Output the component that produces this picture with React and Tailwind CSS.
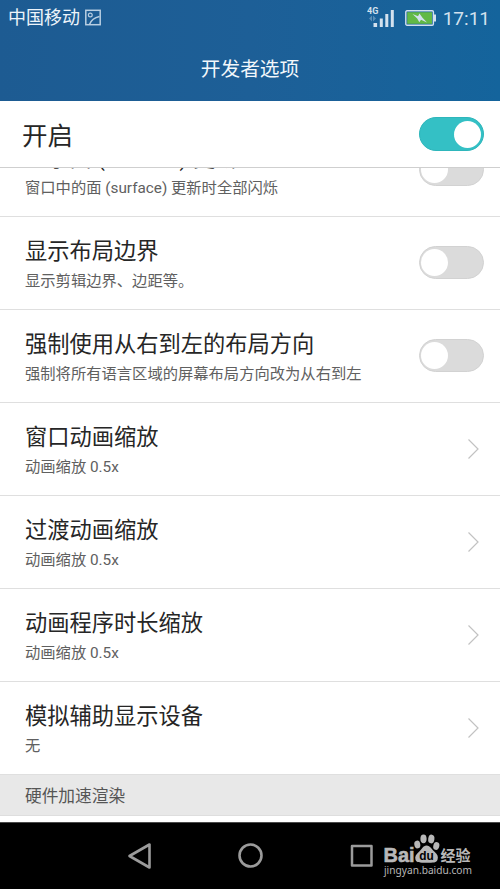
import React from 'react'

const rows = [
  { title: '显示面 (surface) 更新', sub: '窗口中的面 (surface) 更新时全部闪烁', toggle: true },
  { title: '显示布局边界', sub: '显示剪辑边界、边距等。', toggle: true },
  { title: '强制使用从右到左的布局方向', sub: '强制将所有语言区域的屏幕布局方向改为从右到左', toggle: true },
  { title: '窗口动画缩放', sub: '动画缩放 0.5x' },
  { title: '过渡动画缩放', sub: '动画缩放 0.5x' },
  { title: '动画程序时长缩放', sub: '动画缩放 0.5x' },
  { title: '模拟辅助显示设备', sub: '无' },
];

const Toggle = ({ on }) => (
  <div
    className={
      on
        ? 'flex h-[34px] w-[65.5px] items-center justify-end rounded-full border border-[#2eb6bb] bg-[#34c0c5] px-[2px]'
        : 'mb-px flex h-[33px] w-[65.5px] items-center rounded-full border border-[#d2d2d2] bg-[#dbdbdb] px-[1.5px]'
    }
  >
    <div className="size-[27px] rounded-full bg-white" />
  </div>
);

const Chevron = () => (
  <svg className="mr-[4px]" width="13" height="22" viewBox="0 0 13 22" fill="none" stroke="#c2c2c2" strokeWidth="1.2">
    <path d="M1.5 1.5 11 11 1.5 20.5" />
  </svg>
);

const Row = ({ title, sub, toggle }) => (
  <div className="flex h-[93px] shrink-0 items-center justify-between border-b border-[#dfdfdf] pr-4 pl-[25px]">
    <div className="pt-[1px] whitespace-nowrap">
      <div className="text-[22.25px] leading-[30px] text-[#262626]">{title}</div>
      <div className="mt-[4px] text-[15.3px] leading-[22px] text-[#606060]">{sub}</div>
    </div>
    {toggle ? <Toggle /> : <Chevron />}
  </div>
);

const StatusBar = () => (
  <div className="flex h-[35px] items-center justify-between pr-[10px] pl-2 text-[#d3e1ee]">
    <div className="flex items-center gap-[5px]">
      <span className="text-[18px] leading-[24px] text-[#edf4fa]">中国移动</span>
      <svg width="16" height="17" viewBox="0 0 16 17" fill="none" stroke="#b9cfe2" strokeWidth="1.5">
        <rect x="0.8" y="1.3" width="14.4" height="14.4" />
        <circle cx="5.3" cy="6" r="1.9" strokeWidth="1.2" />
        <path d="M4.5 15.5C6 11.5 9.5 8.5 14.5 7.5" />
      </svg>
    </div>
    <div className="flex items-center">
      <svg width="27" height="22" viewBox="0 0 27 22" fill="#d3e1ee">
        <text x="0" y="7.2" fontSize="9" fontWeight="700" fontFamily="Roboto, sans-serif">4G</text>
        <path d="M2 11.5 5 8.5v6zM9 11.5 6 8.5v6z" opacity="0.35" />
        <rect x="6.5" y="16" width="3.6" height="4" />
        <rect x="12.8" y="11.5" width="3" height="8.5" />
        <rect x="18.3" y="7" width="3" height="13" />
        <rect x="23.8" y="3" width="3" height="17" />
      </svg>
      <svg className="ml-[11px]" width="32" height="16" viewBox="0 0 32 16">
        <rect x="0.8" y="0.8" width="27.6" height="14.4" rx="1.2" fill="none" stroke="#d3e1ee" strokeWidth="1.4" />
        <rect x="2.2" y="2.2" width="24.8" height="11.6" fill="#62b946" />
        <path d="M29 4.5h2v7h-2z" fill="#d3e1ee" />
        <path d="M7.5 4 13 6.300 14.500 3.500 17.500 7.800 22 12.500 16 9.800 14.300 12.300 12.200 8.500z" fill="#d3e1ee" />
      </svg>
      <span className="ml-[6px] pt-[2px] font-['Roboto'] text-[19px] leading-[24px]">17:11</span>
    </div>
  </div>
);

const Watermark = () => (
  <svg width="92" height="48" viewBox="382 833 92 48" fill="#b8b8b8">
    <text x="383.5" y="862.5" fontSize="20" fontWeight="700" fontFamily="Liberation Sans, sans-serif" stroke="#b8b8b8" strokeWidth="0.6" textLength="31" lengthAdjust="spacingAndGlyphs">Bai</text>
    <ellipse cx="417.3" cy="845.5" rx="3" ry="3.9" transform="rotate(-10 417.3 845.5)" />
    <ellipse cx="423.5" cy="839.8" rx="3.1" ry="4.4" />
    <ellipse cx="431.3" cy="840" rx="3.1" ry="4.4" transform="rotate(8 431.3 840)" />
    <ellipse cx="436.3" cy="847" rx="3" ry="3.9" transform="rotate(15 436.3 847)" />
    <path d="M426.5 846.5c4 0 5 4 8 6.3c3 2.500 4 5 3 8c-1 3-4 3-11 3s-10 0-11-3c-1-3 .5-5.500 3.500-8c3-2.500 4-6.300 7.500-6.300z" />
    <text x="419.3" y="861.3" fontSize="12.5" fontWeight="700" fill="#000" fontFamily="Liberation Sans, sans-serif" textLength="14.5" lengthAdjust="spacingAndGlyphs">du</text>
    <text x="440.5" y="862" fontSize="15" fontWeight="700" fontFamily="Noto Sans CJK SC, sans-serif">经验</text>
    <text x="384" y="874.5" fontSize="11.5" fontFamily="Noto Sans, sans-serif" textLength="88" lengthAdjust="spacingAndGlyphs">jingyan.baidu.com</text>
  </svg>
);

const NavBar = () => (
  <div className="flex h-[67px] shrink-0 items-center border-t border-[#4a4a4a] bg-black pl-[127px]">
    <svg width="26" height="28" viewBox="0 0 26 28" fill="none" stroke="#9b9b9b" strokeWidth="2.6" strokeLinejoin="round">
      <path d="M22.5 2.5v23L2.500 14z" />
    </svg>
    <svg className="ml-[84px]" width="28" height="28" viewBox="0 0 28 28" fill="none" stroke="#9b9b9b" strokeWidth="2.6">
      <circle cx="13.5" cy="13.5" r="11" />
    </svg>
    <svg className="ml-[85px]" width="24" height="24" viewBox="0 0 24 24" fill="none" stroke="#9b9b9b" strokeWidth="2.5" strokeLinejoin="round">
      <rect x="2" y="2" width="19.5" height="19.5" />
    </svg>
    <div className="ml-[8px]">
      <Watermark />
    </div>
  </div>
);

const App = () => {
  return (
    <div className="flex h-[889px] w-[500px] flex-col overflow-hidden bg-white font-['Roboto','Noto_Sans_CJK_SC',sans-serif]">
      <header className="h-[101px] shrink-0 bg-linear-to-r from-[#1d5b92] via-[#1d5f97] to-[#14649c]">
        <StatusBar />
        <h1 className="pt-[20px] text-center text-[19.7px] leading-[30px] text-[#f2f7fb]">开发者选项</h1>
      </header>
      <div className="flex h-[67px] shrink-0 items-center justify-between border-b border-[#cfcfcf] pr-4 pl-[22px]">
        <span className="pt-[4px] text-[25.5px] leading-[36px] text-[#262626]">开启</span>
        <Toggle on />
      </div>
      {/* list is scrolled, so the first row is cut at its top */}
      <div className="flex h-[607px] shrink-0 flex-col justify-end overflow-hidden">
        {rows.map((row) => (
          <Row key={row.title} {...row} />
        ))}
      </div>
      <div className="flex h-[41px] shrink-0 items-center border-b border-[#dedede] bg-[#e8e8e8] pt-[3px] pl-[25px] text-[16.7px] text-[#555]">
        硬件加速渲染
      </div>
      <div className="h-[6px] shrink-0 bg-white" />
      <NavBar />
    </div>
  );
}


export default App;
